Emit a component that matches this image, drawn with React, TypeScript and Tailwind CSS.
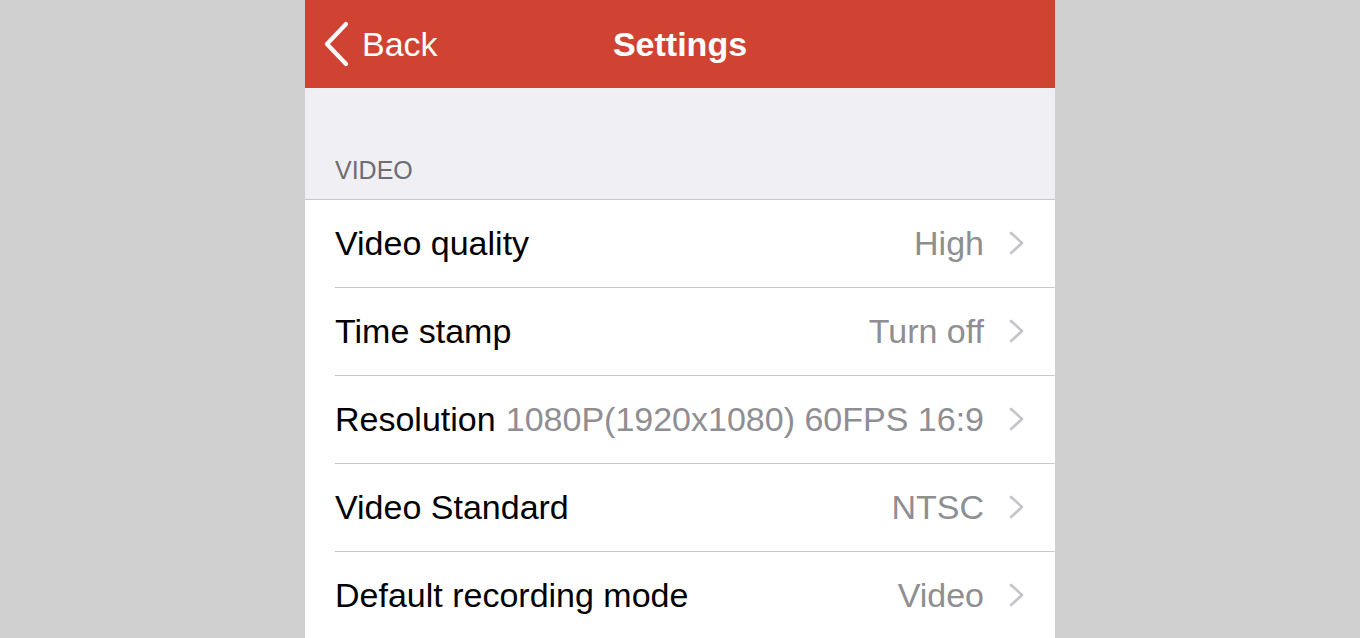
import React from "react";

const rows = [
  { label: "Video quality", value: "High" },
  { label: "Time stamp", value: "Turn off" },
  { label: "Resolution", value: "1080P(1920x1080) 60FPS 16:9" },
  { label: "Video Standard", value: "NTSC" },
  { label: "Default recording mode", value: "Video" },
];

function Chevron() {
  return (
    <svg width="18" height="26" viewBox="0 0 18 26" className="shrink-0 ml-[24px]">
      <path d="M3 3 L14 13 L3 23" fill="none" stroke="#c4c4c8" strokeWidth="2.6" strokeLinecap="round" strokeLinejoin="round" />
    </svg>
  );
}

export default function App() {
  return (
    <div
      className="w-[1360px] h-[638px] bg-[#d0d0d0] flex justify-center overflow-hidden"
      style={{ fontFamily: '"Liberation Sans", Arial, sans-serif' }}
    >
      <div className="w-[750px] flex flex-col bg-[#efeff4]">
        <div className="h-[88px] bg-[#d04333] flex items-center relative shrink-0">
          <div className="absolute left-[17px] top-0 h-[88px] flex items-center">
            <svg width="30" height="46" viewBox="0 0 30 46">
              <path d="M24 3 L5 23 L24 43" fill="none" stroke="#ffffff" strokeWidth="4.2" strokeLinecap="round" strokeLinejoin="round" />
            </svg>
            <span className="text-white text-[34px] ml-[10px] leading-none">Back</span>
          </div>
          <div className="flex-1 text-center text-white text-[34px] font-bold leading-none">Settings</div>
        </div>
        <div className="h-[111px] flex items-end pl-[30px] pb-[16px] shrink-0">
          <span className="text-[25px] text-[#6d6d72] leading-none">VIDEO</span>
        </div>
        <div className="bg-white border-t border-[#c8c7cc] flex flex-col">
          {rows.map((r, i) => (
            <div key={i} className="pl-[30px] shrink-0">
              <div className={"h-[88px] flex items-center pr-[29px] pb-[2px] " + (i < rows.length - 1 ? "border-b border-[#c8c7cc]" : "")}>
                <span className="text-[34px] text-black whitespace-nowrap leading-none shrink-0">{r.label}</span>
                <span className="flex-1 min-w-0 text-right text-[34px] text-[#8e8e93] whitespace-nowrap leading-none ml-[6px]">{r.value}</span>
                <Chevron />
              </div>
            </div>
          ))}
        </div>
      </div>
    </div>
  );
}
